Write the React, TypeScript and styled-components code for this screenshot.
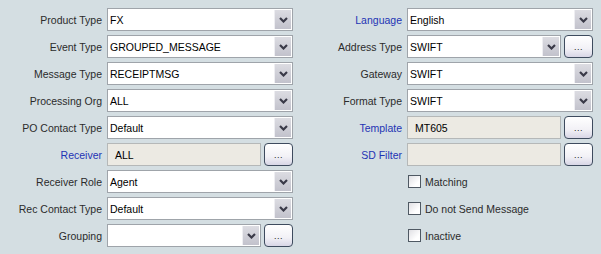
import React from "react";
import styled, { createGlobalStyle } from "styled-components";

const GlobalStyle = createGlobalStyle`
    html, body {
        margin: 0;
        padding: 0;
        background-color: #D4DEE2;
        font-family: "Liberation Sans", Arial, sans-serif;
        font-size: 10.5px;
    }
`;

const Page = styled.div`
    display: grid;
    grid-template-columns: 300px 300px;
    padding-top: 8px;
    width: 601px;
    height: 254px;
    box-sizing: border-box;
`;

const Column = styled.div`
    display: flex;
    flex-direction: column;
    gap: 4px;
`;

const Row = styled.div`
    display: grid;
    grid-template-columns: 102px 186px;
    column-gap: 5px;
    align-items: center;
    height: 23px;
`;

const Label = styled.span<{ $link?: boolean }>`
    text-align: right;
    color: ${(p) => (p.$link ? "#1E34B4" : "#2b2b2b")};
    white-space: nowrap;
`;

const Control = styled.div`
    display: flex;
    align-items: center;
    gap: 3px;
    height: 23px;
`;

const Combo = styled.div`
    flex: 1;
    display: flex;
    align-items: center;
    height: 23px;
    box-sizing: border-box;
    border: 1px solid #9FA4AA;
    background: #FFFFFF;
    padding: 1px;
`;

const ComboText = styled.span`
    flex: 1;
    padding-left: 1px;
    color: #000;
    white-space: nowrap;
    overflow: hidden;
`;

const ArrowButton = styled.div`
    width: 16px;
    height: 19px;
    display: flex;
    align-items: center;
    justify-content: center;
    background: linear-gradient(#DCDCE2, #C2C2CC);
    border-left: 1px solid #EEEEF2;
`;

const Field = styled.div`
    flex: 1;
    height: 23px;
    box-sizing: border-box;
    border: 1px solid #B5B8B8;
    background: #ECEAE3;
    display: flex;
    align-items: center;
    padding-left: 7px;
    color: #000;
`;

const Ellipsis = styled.div`
    width: 29px;
    height: 23px;
    box-sizing: border-box;
    border: 1px solid #3E4B5E;
    border-radius: 4px;
    background: linear-gradient(#FFFFFF, #F2F1F6 60%, #D8D6E6);
    display: flex;
    align-items: flex-end;
    justify-content: center;
    padding-bottom: 5px;
    font-size: 9px;
    line-height: 9px;
    color: #222;
    letter-spacing: 0.5px;
`;

const CheckRow = styled.label`
    display: flex;
    align-items: center;
    gap: 4px;
    height: 23px;
    margin-left: 108px;
    color: #2b2b2b;
`;

const CheckBox = styled.span`
    width: 13px;
    height: 13px;
    box-sizing: border-box;
    border: 1px solid #4F5963;
    background: linear-gradient(135deg, #E0E0E4, #FFFFFF 70%);
`;

const Chevron = () => (
    <svg width="9" height="6" viewBox="0 0 9 6">
        <path d="M1 1 L4.5 4.5 L8 1" fill="none" stroke="#3A3A48" strokeWidth="2.2" />
    </svg>
);

const ComboBox: React.FC<{ value?: string }> = ({ value }) => (
    <Combo>
        <ComboText>{value}</ComboText>
        <ArrowButton>
            <Chevron />
        </ArrowButton>
    </Combo>
);

type Item = {
    label: string;
    value?: string;
    link?: boolean;
    kind: "combo" | "comboBtn" | "field";
};

const left: Item[] = [
    { label: "Product Type", value: "FX", kind: "combo" },
    { label: "Event Type", value: "GROUPED_MESSAGE", kind: "combo" },
    { label: "Message Type", value: "RECEIPTMSG", kind: "combo" },
    { label: "Processing Org", value: "ALL", kind: "combo" },
    { label: "PO Contact Type", value: "Default", kind: "combo" },
    { label: "Receiver", value: "ALL", link: true, kind: "field" },
    { label: "Receiver Role", value: "Agent", kind: "combo" },
    { label: "Rec Contact Type", value: "Default", kind: "combo" },
    { label: "Grouping", value: "", kind: "comboBtn" },
];

const right: Item[] = [
    { label: "Language", value: "English", link: true, kind: "combo" },
    { label: "Address Type", value: "SWIFT", kind: "comboBtn" },
    { label: "Gateway", value: "SWIFT", kind: "combo" },
    { label: "Format Type", value: "SWIFT", kind: "combo" },
    { label: "Template", value: "MT605", link: true, kind: "field" },
    { label: "SD Filter", value: "", link: true, kind: "field" },
];

const FormRow: React.FC<{ item: Item }> = ({ item }) => (
    <Row>
        <Label $link={item.link}>{item.label}</Label>
        <Control>
            {item.kind === "field" ? <Field>{item.value}</Field> : <ComboBox value={item.value} />}
            {item.kind !== "combo" && <Ellipsis>...</Ellipsis>}
        </Control>
    </Row>
);

const App: React.FC = () => {
    return (
        <>
            <GlobalStyle />
            <Page>
                <Column>
                    {left.map((it) => (
                        <FormRow key={it.label} item={it} />
                    ))}
                </Column>
                <Column>
                    {right.map((it) => (
                        <FormRow key={it.label} item={it} />
                    ))}
                    {["Matching", "Do not Send Message", "Inactive"].map((c) => (
                        <CheckRow key={c}>
                            <CheckBox />
                            {c}
                        </CheckRow>
                    ))}
                </Column>
            </Page>
        </>
    );
};

export default App;
